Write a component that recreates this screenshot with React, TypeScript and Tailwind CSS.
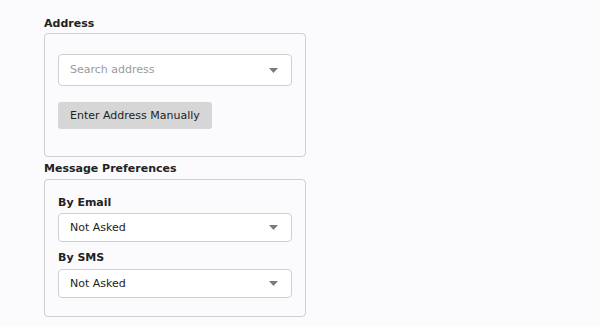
import React from 'react';

function Caret() {
    return (
        <svg width="9" height="5" viewBox="0 0 9 5" className="shrink-0">
            <path d="M0 0 L9 0 L4.5 5 Z" fill="#7a7a7a" />
        </svg>
    );
}

function SelectBox({ value, placeholder, tall }: { value?: string; placeholder?: string; tall?: boolean }) {
    return (
        <div
            className={`flex items-center justify-between bg-white border border-[#cfcfcf] rounded-[4px] pl-[11px] pr-[13px] ${tall ? 'h-[32px]' : 'h-[29px]'}`}
        >
            {value ? (
                <span className="text-[#222]">{value}</span>
            ) : (
                <span className="text-[#9a9a9a]">{placeholder}</span>
            )}
            <Caret />
        </div>
    );
}

export default function App() {
    return (
        <div
            className="min-h-screen bg-[#fbfafc] pl-[44px] pt-[16px] text-[11px] leading-[16px] text-[#222]"
            style={{ fontFamily: '"DejaVu Sans", Verdana, sans-serif' }}
        >
            <div className="w-[262px]">
                {/* Address */}
                <div className="font-bold mb-[1px]">Address</div>
                <div className="border border-[#cfcfcf] rounded-[4px] px-[13px] pt-[20px] pb-[27px]">
                    <SelectBox placeholder="Search address" tall />
                    <button className="mt-[16px] h-[27px] px-[12px] bg-[#d6d6d6] rounded-[3px] text-[#222]">
                        Enter Address Manually
                    </button>
                </div>

                {/* Message Preferences */}
                <div className="font-bold mt-[4px] mb-[2px]">Message Preferences</div>
                <div className="border border-[#cfcfcf] rounded-[4px] px-[13px] pt-[15px] pb-[18px]">
                    <div className="font-bold mb-[2px]">By Email</div>
                    <SelectBox value="Not Asked" />
                    <div className="font-bold mt-[8px] mb-[3px]">By SMS</div>
                    <SelectBox value="Not Asked" />
                </div>
            </div>
        </div>
    );
}
